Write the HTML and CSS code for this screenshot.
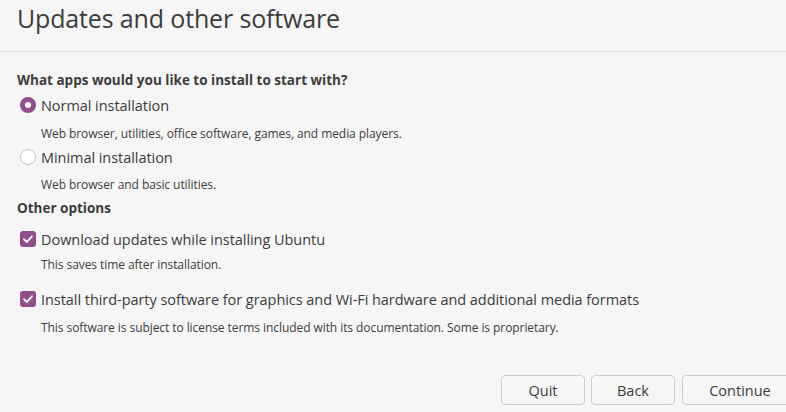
FILE: index.html
```html
<!DOCTYPE html>
<html>
<head>
<meta charset="utf-8">
<link rel="stylesheet" href="styles.css">
</head>
<body>
<div class="page">
  <header class="header"><h1 class="title">Updates and other software</h1></header>
  <main class="content">
    <div class="heading h1">What apps would you like to install to start with?</div>
    <div class="option r1"><span class="radio checked"></span><span class="label">Normal installation</span></div>
    <div class="desc d1">Web browser, utilities, office software, games, and media players.</div>
    <div class="option r2"><span class="radio"></span><span class="label">Minimal installation</span></div>
    <div class="desc d2">Web browser and basic utilities.</div>
    <div class="heading h2">Other options</div>
    <div class="option c1"><span class="check"><svg width="16" height="16" viewBox="0 0 16 16"><path d="M4 8.2 L6.8 11 L12 5.3" fill="none" stroke="#fff" stroke-width="1.8" stroke-linecap="round" stroke-linejoin="round"/></svg></span><span class="label">Download updates while installing Ubuntu</span></div>
    <div class="desc d3">This saves time after installation.</div>
    <div class="option c2"><span class="check"><svg width="16" height="16" viewBox="0 0 16 16"><path d="M4 8.2 L6.8 11 L12 5.3" fill="none" stroke="#fff" stroke-width="1.8" stroke-linecap="round" stroke-linejoin="round"/></svg></span><span class="label">Install third-party software for graphics and Wi-Fi hardware and additional media formats</span></div>
    <div class="desc d4">This software is subject to license terms included with its documentation. Some is proprietary.</div>
  </main>
  <footer class="footer">
    <button class="btn quit">Quit</button>
    <button class="btn back">Back</button>
    <button class="btn cont">Continue</button>
  </footer>
</div>
</body>
</html>
```
FILE: styles.css
```css
html, body {
  margin: 0;
  padding: 0;
  background: #f6f6f6;
  overflow: hidden;
}
.page {
  width: 786px;
  height: 412px;
  font-family: "Open Sans", "Noto Sans", sans-serif;
  color: #3c3c3c;
  overflow: hidden;
}
.header {
  height: 51px;
  border-bottom: 1px solid #dcdcdc;
  padding-left: 17px;
  box-sizing: content-box;
}
.title {
  margin: 0;
  font-weight: 400;
  font-size: 25px;
  line-height: 36px;
  letter-spacing: -0.15px;
}
.content {
  padding-left: 17px;
}
.heading {
  font-weight: 700;
  font-size: 13.5px;
  line-height: 20px;
  height: 20px;
}
.h1 { margin-top: 18px; }
.h2 { margin-top: 3px; }
.option {
  display: flex;
  align-items: center;
  height: 24px;
  padding-left: 3px;
}
.r1 { margin-top: 3px; }
.r2 { margin-top: 1px; }
.c1 { margin-top: 9px; }
.c2 { margin-top: 12px; }
.label {
  font-size: 14.5px;
  margin-left: 5px;
  letter-spacing: -0.05px;
}
.radio {
  width: 16px;
  height: 16px;
  box-sizing: border-box;
  border-radius: 50%;
  border: 1px solid #c6c6c6;
  background: #fff;
  flex: none;
}
.radio.checked {
  border: 5px solid #924d8b;
  background: #fff;
}
.check {
  width: 16px;
  height: 16px;
  border-radius: 3px;
  background: #924d8b;
  flex: none;
  display: block;
}
.check svg { display: block; }
.desc {
  font-size: 12px;
  line-height: 20px;
  height: 20px;
  padding-left: 24px;
  letter-spacing: -0.07px;
}
.d1 { margin-top: 7px; }
.d2 { margin-top: 6px; }
.d3 { margin-top: 4px; }
.d4 { margin-top: 7px; }
.footer {
  display: flex;
  gap: 6px;
  margin-top: 37px;
  padding-left: 501px;
}
.btn {
  flex: none;
  height: 30px;
  box-sizing: border-box;
  border: 1px solid #cdcdcd;
  border-radius: 4px;
  background: linear-gradient(#fafafa, #f3f3f3);
  font-family: inherit;
  font-size: 14.5px;
  color: #3c3c3c;
  padding: 0;
}
.quit { width: 84px; }
.back { width: 84px; }
.cont { width: 116px; margin-left: 1px; }
```
